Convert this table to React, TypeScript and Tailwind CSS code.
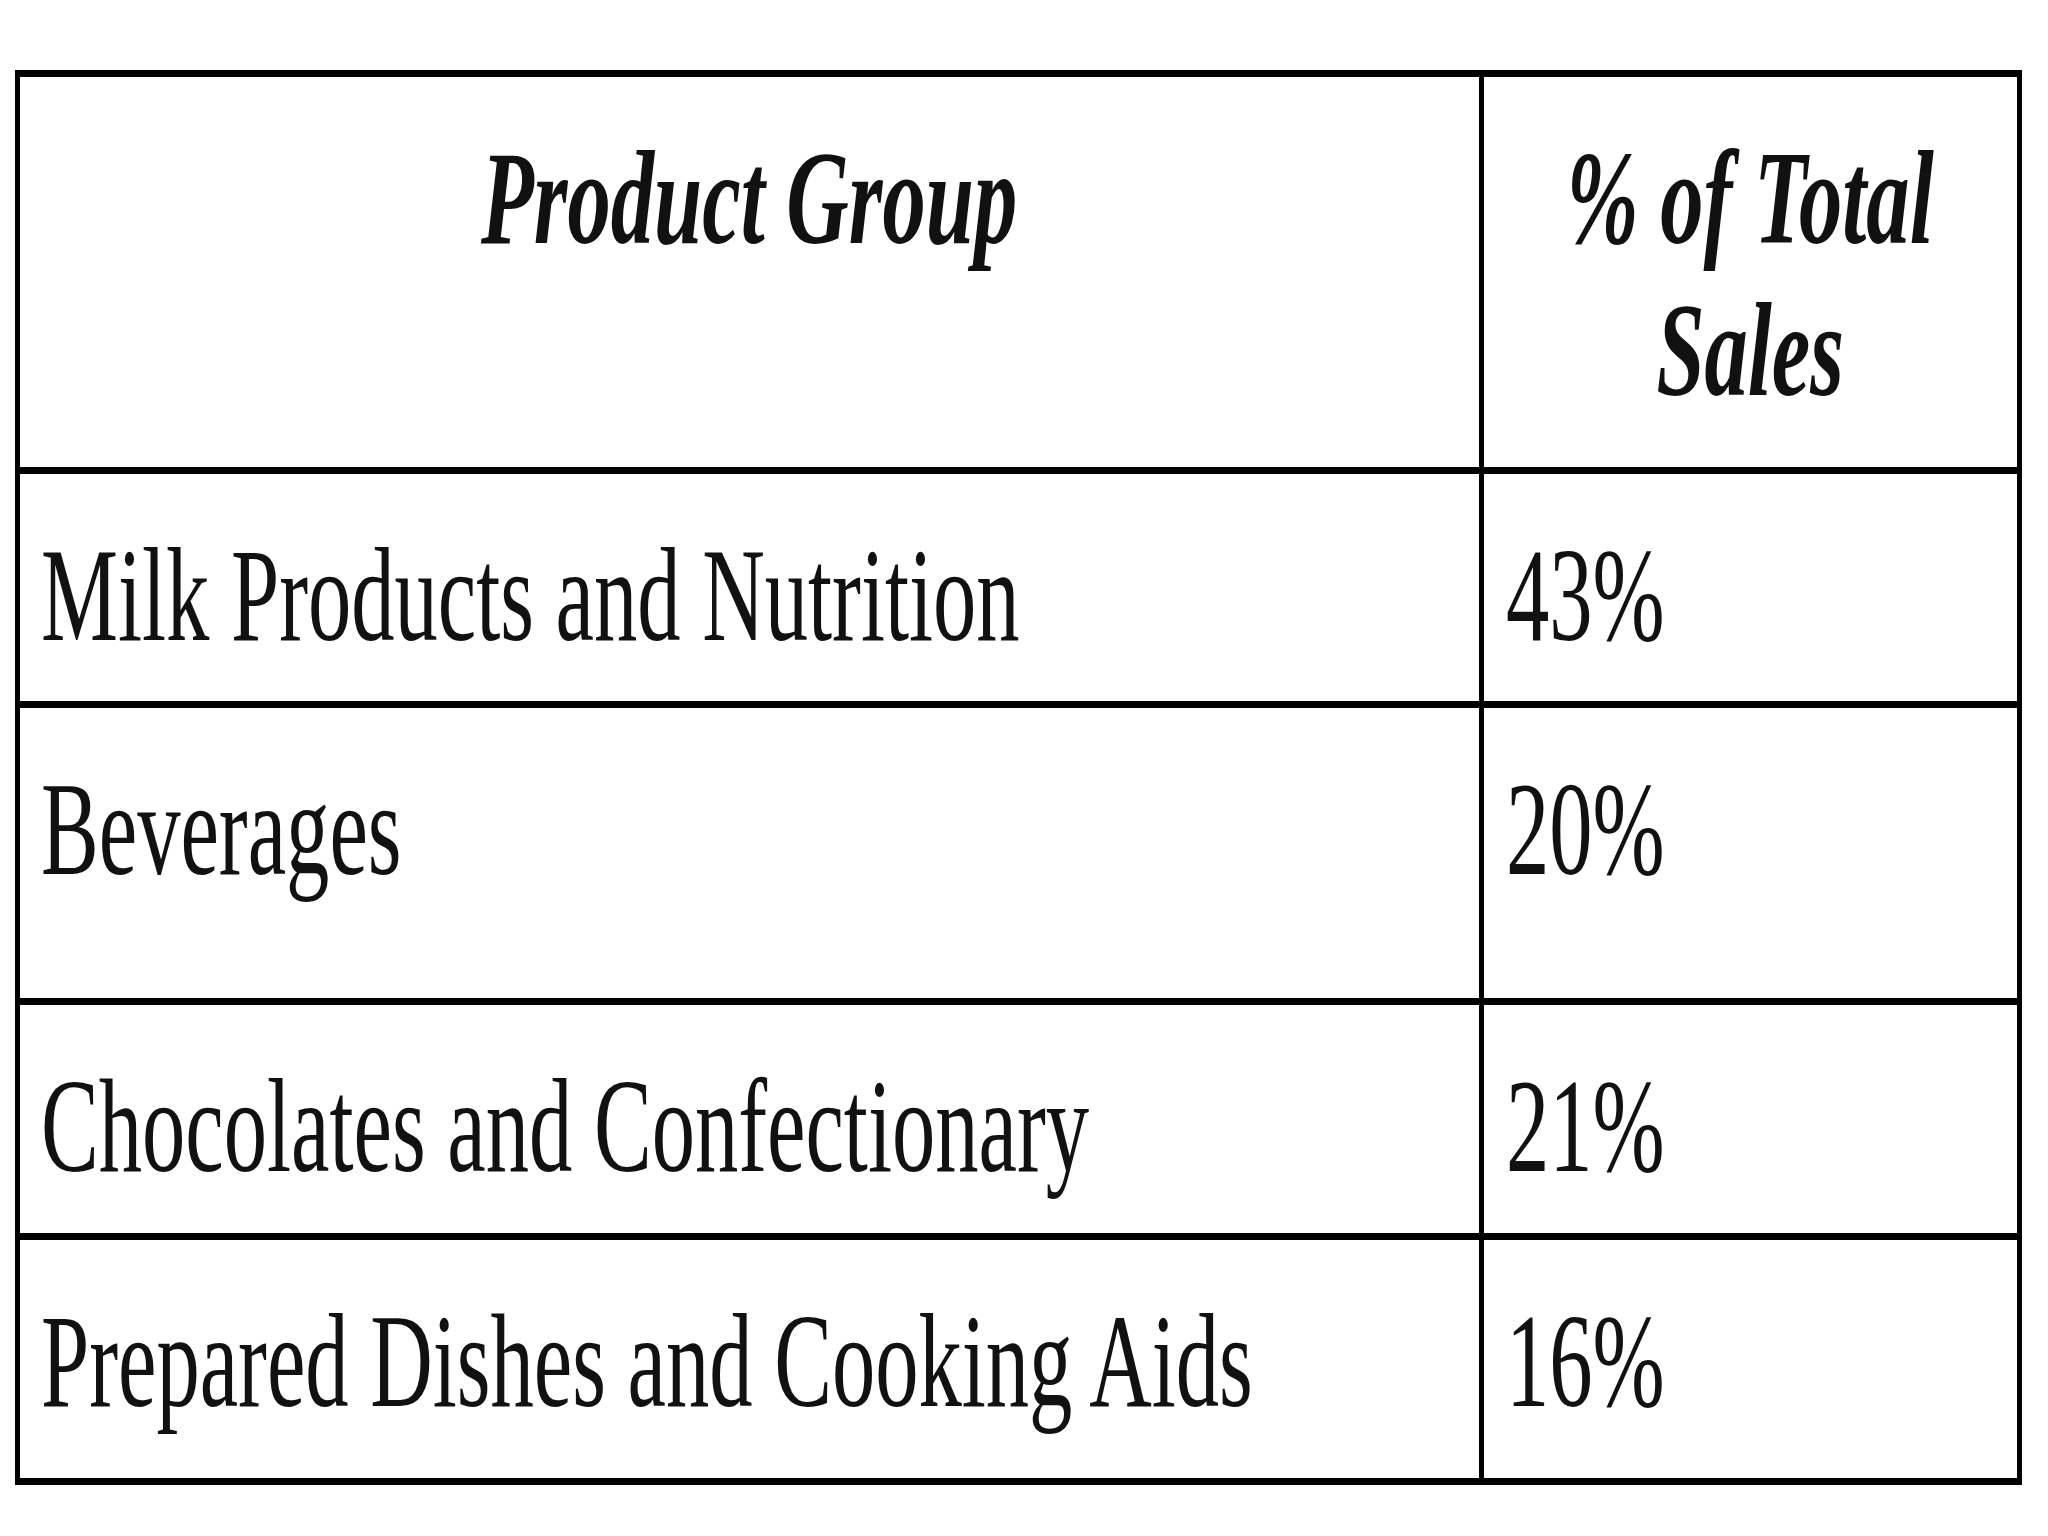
const serif = "font-['Liberation_Serif','Times_New_Roman',serif]";

interface SalesRow {
  group: string;
  share: string;
  height: string;
}

const rows: SalesRow[] = [
  { group: "Milk Products and Nutrition", share: "43%", height: "h-[234px]" },
  { group: "Beverages", share: "20%", height: "h-[297px]" },
  { group: "Chocolates and Confectionary", share: "21%", height: "h-[235px]" },
  { group: "Prepared Dishes and Cooking Aids", share: "16%", height: "h-[245px]" },
];

// the source table is a squeezed scan, so the serif is narrowed horizontally
function Squeezed({ children, center = false }: { children: React.ReactNode; center?: boolean }) {
  return (
    <span
      className={`inline-block whitespace-nowrap scale-x-[0.646] ${
        center ? "origin-center" : "origin-left"
      }`}
    >
      {children}
    </span>
  );
}

export default function App() {
  return (
    <div className={`min-h-[1536px] w-[2048px] bg-white pt-[70px] pl-[15px] text-[#111] ${serif}`}>
      <div className="w-[2007px] border-x-[5px] border-y-[7px] border-black text-[134px] leading-[152px]">
        <div className="grid h-[390px] grid-cols-[1464px_533px] font-bold italic">
          <div className="flex flex-col items-center border-r-[5px] border-black pt-[45px]">
            <Squeezed center>Product Group</Squeezed>
          </div>
          <div className="flex flex-col items-center pt-[45px]">
            <Squeezed center>% of Total</Squeezed>
            <Squeezed center>Sales</Squeezed>
          </div>
        </div>
        {rows.map((r) => (
          <div
            key={r.group}
            className={`grid grid-cols-[1464px_533px] border-t-[7px] border-black ${r.height}`}
          >
            <div className="border-r-[5px] border-black pl-[21px] pt-[45px]">
              <Squeezed>{r.group}</Squeezed>
            </div>
            <div className="pl-[22px] pt-[45px]">
              <Squeezed>{r.share}</Squeezed>
            </div>
          </div>
        ))}
      </div>
    </div>
  );
}
